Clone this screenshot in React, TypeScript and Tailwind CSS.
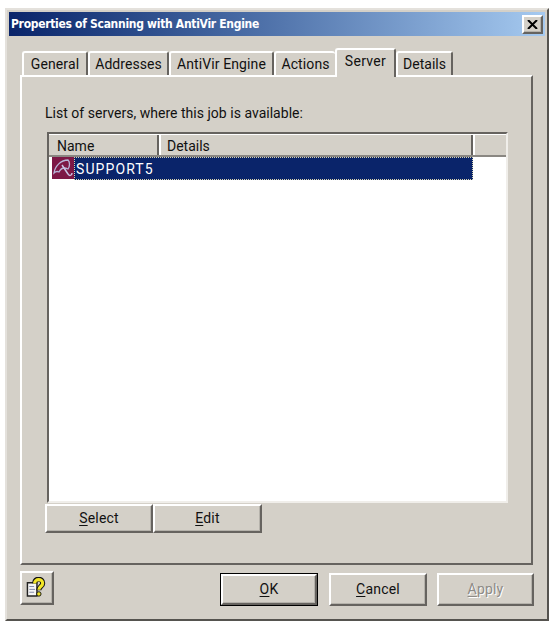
import { useState, type ReactNode } from 'react';
import clsx from 'clsx';

const TABS = [
  { label: 'General', width: 'w-[66px]', text: 'tracking-[0.1px]' },
  { label: 'Addresses', width: 'w-[81px]', text: 'tracking-[0.05px]' },
  { label: 'AntiVir Engine', width: 'w-[105px]', text: 'tracking-[0.1px]' },
  { label: 'Actions', width: 'w-[61px]', text: 'tracking-[0.1px]' },
  { label: 'Server', width: 'w-[61px]', text: 'tracking-[0.3px]' },
  { label: 'Details', width: 'w-[57px]', text: 'tracking-normal' },
];

const RAISED =
  'border-2 border-t-white border-l-white border-r-[#66635f] border-b-[#66635f] shadow-[inset_-1px_-1px_0_#b5b2ab]';

type ButtonProps = {
  className?: string;
  disabled?: boolean;
  children: ReactNode;
};

function Button({ className, disabled, children }: ButtonProps) {
  return (
    <button
      disabled={disabled}
      className={clsx(
        'flex items-center justify-center bg-[#d4d0c8]',
        disabled && 'text-[#8e8b86] [text-shadow:1px_1px_0_#fff]',
        className,
      )}
    >
      {children}
    </button>
  );
}

function Mnemonic({ text }: { text: string }) {
  return (
    <span className="-mt-[2px] tracking-[0.2px]">
      <span className="underline decoration-1 underline-offset-2">{text[0]}</span>
      {text.slice(1)}
    </span>
  );
}

function UmbrellaIcon() {
  return (
    <svg className="h-[22px] w-[22px] shrink-0" viewBox="0 0 22 22" fill="none">
      <rect width="22" height="22" fill="#7d1745" />
      <path
        d="M2 16C3 9 9 3 16 3C18 5 18 9 16 12C12 10 9 11 7 15C5 14 3 15 2 16Z"
        stroke="#b9b4d8"
        strokeWidth="1.3"
      />
      <path d="M10 8L16 17C17 19 20 19 20 16" stroke="#c9c4e4" strokeWidth="1.5" />
    </svg>
  );
}

function HelpIcon() {
  return (
    <svg className="-mt-[3px] -ml-[3px] h-[20px] w-[20px]" viewBox="0 0 20 21" fill="none">
      <path d="M1 6H11V20H1Z" fill="#f5f5f5" stroke="#222" strokeWidth="1.5" />
      <path d="M3 10H8M3 13H9M3 16H8" stroke="#7c86a8" />
      <path d="M8.5 6.5C8.5 1 17 1 17 6.5C17 10 13 10 13 14" stroke="#111" strokeWidth="5.4" />
      <path d="M8.5 6.8C8.5 1.5 17 1.5 17 6.5C17 10 13 10 13 13.4" stroke="#f2e627" strokeWidth="3.3" />
      <circle cx="13" cy="17.8" r="2.3" fill="#f2e627" stroke="#111" />
    </svg>
  );
}

export default function App() {
  const [active, setActive] = useState('Server');

  return (
    <div className="h-[623px] w-[551px] overflow-hidden bg-white pt-2 pl-[5px] font-['Roboto','Liberation_Sans',sans-serif] text-sm leading-4 text-[#111]">
      <div className="flex h-[613px] w-[544px] flex-col border-2 border-t-[#e4e1dc] border-r-[#55534f] border-b-[#55534f] border-l-[#e4e1dc] bg-[#d4d0c8] px-[2px] pt-[2px]">
        {/* Title bar */}
        <div className="flex h-6 shrink-0 items-center justify-between bg-linear-to-r from-[#0a246a] to-[#a6caf0] pr-[2px] pl-[2px]">
          <h1 className="font-['DejaVu_Sans_Condensed','DejaVu_Sans',sans-serif] text-[12px] font-bold tracking-[-0.3px] whitespace-nowrap text-white">
            Properties of Scanning with AntiVir Engine
          </h1>
          <Button className={clsx('h-[19px] w-[21px]', RAISED)}>
            <svg className="h-[9px] w-[11px]" viewBox="0 0 11 9" stroke="#000" strokeWidth="2">
              <path d="M1 0L10 9M10 0L1 9" />
            </svg>
          </Button>
        </div>

        {/* Tabs */}
        <div className="mt-3 flex h-[27px] shrink-0 items-end pl-[13px]">
          {TABS.map(tab => (
            <button
              key={tab.label}
              onClick={() => setActive(tab.label)}
              className={clsx(
                'shrink-0 rounded-t-[3px] border-t-2 border-l-2 border-t-white border-l-white bg-[#d4d0c8] whitespace-nowrap',
                tab.label !== 'Actions' && 'border-r-2 border-r-[#66635f]',
                tab.width,
                tab.text,
                active === tab.label ? 'relative z-10 -mb-[2px] h-[29px] pb-[5px]' : 'h-6 pb-px',
              )}
            >
              {tab.label}
            </button>
          ))}
        </div>

        {/* Tab page */}
        <div className="ml-[11px] flex h-[490px] w-[513px] shrink-0 flex-col border-2 border-t-white border-r-[#66635f] border-b-[#66635f] border-l-white pl-[23px]">
          <p className="mt-[28px] tracking-[0.02px] whitespace-nowrap">List of servers, where this job is available:</p>

          <div className="mt-[11px] ml-[2px] flex h-[371px] w-[461px] shrink-0 flex-col border-2 border-t-[#66635f] border-r-[#f0eeea] border-b-[#f0eeea] border-l-[#66635f] bg-white">
            <div className="flex h-[23px] shrink-0 border-t border-b-2 border-t-white border-b-[#8a8782] bg-[#d4d0c8] leading-[22px]">
              <span className="w-[110px] border-r-2 border-r-[#66635f] pl-2">Name</span>
              <span className="w-[314px] border-r-2 border-l-2 border-r-[#66635f] border-l-white pl-[6px]">Details</span>
              <span className="flex-1 border-l-2 border-l-white" />
            </div>
            <div className="flex pl-[3px]">
              <UmbrellaIcon />
              <span className="h-[23px] w-[399px] border border-dotted border-[#d9d4b0] bg-[#0a246a] pl-px leading-[22px] tracking-[1.1px] text-white">
                SUPPORT5
              </span>
            </div>
          </div>

          <div className="mt-px flex">
            <Button className={clsx('h-[29px] w-[108px]', RAISED)}>
              <Mnemonic text="Select" />
            </Button>
            <Button className={clsx('h-[29px] w-[109px]', RAISED)}>
              <Mnemonic text="Edit" />
            </Button>
          </div>
        </div>

        {/* Dialog buttons */}
        <div className="mt-[6px] flex items-start pl-[11px]">
          <Button className={clsx('h-[34px] w-[34px]', RAISED)}>
            <HelpIcon />
          </Button>
          <div className="mt-[2px] ml-[166px] border border-black">
            <Button className={clsx('h-[31px] w-[96px]', RAISED)}>
              <Mnemonic text="OK" />
            </Button>
          </div>
          <Button className={clsx('mt-[2px] ml-[11px] h-[33px] w-[98px]', RAISED)}>
            <Mnemonic text="Cancel" />
          </Button>
          <Button disabled className={clsx('mt-[2px] ml-[10px] h-[33px] w-[97px]', RAISED)}>
            <Mnemonic text="Apply" />
          </Button>
        </div>
      </div>
    </div>
  );
}
